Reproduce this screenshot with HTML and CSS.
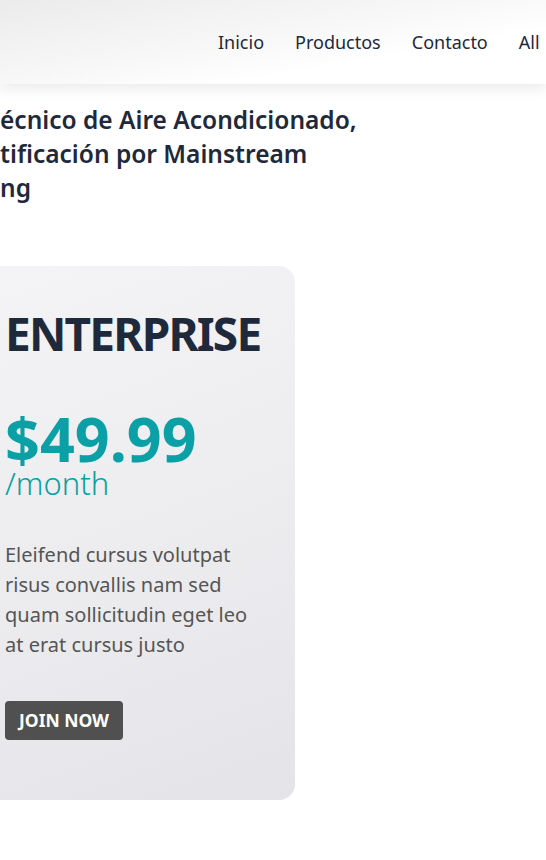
FILE: index.html
```html
<!DOCTYPE html>
<html lang="es">
<head>
<meta charset="utf-8">
<title>Enterprise</title>
<link rel="stylesheet" href="styles.css">
</head>
<body>
<header class="site-header">
  <div class="brand"></div>
  <nav class="nav">
    <a href="#">Inicio</a>
    <a href="#">Productos</a>
    <a href="#">Contacto</a>
    <a href="#">All</a>
  </nav>
</header>
<main class="content">
  <h1 class="title">écnico de Aire Acondicionado,<br>tificación por Mainstream<br>ng</h1>
  <section class="card">
    <h2 class="plan">ENTERPRISE</h2>
    <div class="price-block">
      <span class="price">$49.99</span>
      <span class="period">/month</span>
    </div>
    <p class="desc">Eleifend cursus volutpat risus convallis nam sed quam sollicitudin eget leo at erat cursus justo</p>
    <a class="btn" href="#">JOIN NOW</a>
  </section>
</main>
</body>
</html>
```
FILE: styles.css
```css
html, body {
  margin: 0;
  padding: 0;
  overflow: hidden;
  background: #ffffff;
  font-family: "Noto Sans", "Open Sans", sans-serif;
}

.site-header {
  height: 84px;
  display: flex;
  align-items: center;
  background: linear-gradient(170deg, #ebebec 0%, #f7f7f7 45%, #ffffff 70%);
  box-shadow: 0 4px 14px rgba(0, 0, 0, 0.09);
  position: relative;
  z-index: 1;
  white-space: nowrap;
}

.brand {
  flex: 0 0 218px;
}

.nav {
  display: flex;
  gap: 31px;
  flex: 0 0 auto;
}

.nav a {
  color: #1e293b;
  text-decoration: none;
  font-size: 18px;
  font-weight: 400;
}

.content {
  margin-left: -25px;
}

.title {
  margin: 19px 0 0 25px;
  font-size: 24.5px;
  line-height: 34px;
  font-weight: 600;
  color: #1e293b;
}

.card {
  margin-top: 61px;
  width: 320px;
  box-sizing: border-box;
  padding: 37px 30px 60px 30px;
  border-radius: 16px;
  background: linear-gradient(160deg, #f4f4f6 0%, #ececef 55%, #e4e3e8 100%);
}

.plan {
  margin: 0;
  font-size: 46px;
  line-height: 60px;
  font-weight: 700;
  letter-spacing: -1.8px;
  color: #1e293b;
}

.price-block {
  margin-top: 48px;
  color: #0aa0a6;
}

.price {
  display: block;
  font-size: 61px;
  line-height: 56px;
  font-weight: 700;
}

.period {
  display: block;
  font-size: 31px;
  line-height: 30px;
  font-weight: 300;
  margin-top: 1px;
}

.desc {
  margin: 42px 0 0 0;
  font-size: 20px;
  line-height: 30px;
  color: #555555;
}

.btn {
  display: inline-block;
  margin-top: 41px;
  background: #505050;
  color: #ffffff;
  text-decoration: none;
  font-weight: 700;
  font-size: 17.5px;
  line-height: 39px;
  padding: 0 14px;
  border-radius: 4px;
}
```
